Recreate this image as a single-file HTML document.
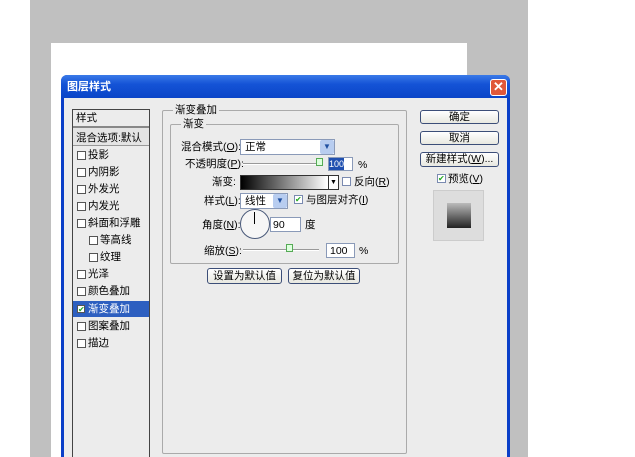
<!DOCTYPE html><html><head><meta charset="utf-8"><style>
*{margin:0;padding:0;box-sizing:border-box}
html,body{width:635px;height:457px;overflow:hidden}
body{background:#fff;position:relative;font-family:"Liberation Sans","Noto Sans CJK SC",sans-serif;font-size:10px;color:#000}
.a{position:absolute}
.t{position:absolute;white-space:nowrap;font-size:10.5px;line-height:12px}
.cb{position:absolute;width:9px;height:9px;border:1px solid #555;background:#fff}
.btn{position:absolute;border:1px solid #3c4e78;border-radius:3px;background:linear-gradient(#fff,#e8e8e0);text-align:center;font-size:10.5px;line-height:12px}
.in{position:absolute;background:#fff;border:1px solid #8a9ab8}
</style></head><body>
<div class="a" style="left:30px;top:0;width:498px;height:457px;background:#c0c0c0"></div>
<div class="a" style="left:51px;top:43px;width:416px;height:414px;background:#fff"></div>
<div class="a" style="left:61px;top:75px;width:449px;height:382px;background:#0a3fc8;border-radius:6px 6px 0 0"></div>
<div class="a" style="left:61px;top:75px;width:449px;height:23px;background:linear-gradient(#3a7ae8,#1453d6 40%,#0a45c8);border-radius:6px 6px 0 0"></div>
<div class="t" style="left:67px;top:81px;color:#fff;font-weight:bold;font-size:11px">图层样式</div>
<div class="a" style="left:490px;top:79px;width:17px;height:17px;background:#e0583a;border:1px solid #fff;border-radius:3px;color:#fff;font-size:13px;line-height:14px;text-align:center;font-weight:bold">✕</div>
<div class="a" style="left:64px;top:98px;width:443px;height:359px;background:#ececec"></div>
<div class="a" style="left:72px;top:109px;width:78px;height:350px;border:1px solid #444;background:#ececec"></div>
<div class="a" style="left:73px;top:126px;width:76px;height:2px;background:#888"></div>
<div class="t" style="left:76px;top:112px">样式</div>
<div class="a" style="left:73px;top:128px;width:76px;height:18px;border-bottom:1px solid #999;background:#e4e4e4"></div>
<div class="t" style="left:76px;top:132px">混合选项:默认</div>
<div class="a" style="left:73px;top:301px;width:76px;height:16px;background:#2d5fc0"></div>
<div class="cb" style="left:77px;top:151px"></div><div class="t" style="left:88px;top:149px">投影</div>
<div class="cb" style="left:77px;top:168px"></div><div class="t" style="left:88px;top:166px">内阴影</div>
<div class="cb" style="left:77px;top:185px"></div><div class="t" style="left:88px;top:183px">外发光</div>
<div class="cb" style="left:77px;top:202px"></div><div class="t" style="left:88px;top:200px">内发光</div>
<div class="cb" style="left:77px;top:219px"></div><div class="t" style="left:88px;top:217px">斜面和浮雕</div>
<div class="cb" style="left:89px;top:236px"></div><div class="t" style="left:100px;top:234px">等高线</div>
<div class="cb" style="left:89px;top:253px"></div><div class="t" style="left:100px;top:251px">纹理</div>
<div class="cb" style="left:77px;top:270px"></div><div class="t" style="left:88px;top:268px">光泽</div>
<div class="cb" style="left:77px;top:287px"></div><div class="t" style="left:88px;top:285px">颜色叠加</div>
<div class="cb" style="left:77px;top:305px;width:8px;height:8px;color:#2a2;font-size:8px;line-height:7px">✔</div><div class="t" style="left:88px;top:303px;color:#fff">渐变叠加</div>
<div class="cb" style="left:77px;top:322px"></div><div class="t" style="left:88px;top:320px">图案叠加</div>
<div class="cb" style="left:77px;top:339px"></div><div class="t" style="left:88px;top:337px">描边</div>
<div class="a" style="left:162px;top:110px;width:245px;height:344px;border:1px solid #aaa;border-radius:2px"></div>
<div class="t" style="left:173px;top:104px;background:#ececec;padding:0 2px">渐变叠加</div>
<div class="a" style="left:170px;top:124px;width:229px;height:140px;border:1px solid #aaa;border-radius:2px"></div>
<div class="t" style="left:181px;top:118px;background:#ececec;padding:0 2px">渐变</div>
<div class="t" style="left:181px;top:141px">混合模式(<u>O</u>):</div>
<div class="in" style="left:240px;top:139px;width:95px;height:16px"></div>
<div class="t" style="left:245px;top:141px">正常</div>
<div class="a" style="left:320px;top:140px;width:14px;height:14px;background:#b8cdf0;border-radius:2px;color:#2050a0;font-size:8px;text-align:center;line-height:14px">▼</div>
<div class="t" style="left:185px;top:158px">不透明度(<u>P</u>):</div>
<div class="a" style="left:243px;top:163px;width:80px;height:2px;border-top:1px solid #999;border-bottom:1px solid #fff"></div>
<div class="a" style="left:316px;top:158px;width:7px;height:8px;background:#dfd;border:1px solid #5a5"></div>
<div class="in" style="left:328px;top:157px;width:25px;height:14px"></div>
<div class="a" style="left:329px;top:158px;width:15px;height:12px;background:#2050b0;color:#fff;font-size:9px;line-height:12px">100</div>
<div class="t" style="left:358px;top:159px">%</div>
<div class="t" style="left:212px;top:176px">渐变:</div>
<div class="a" style="left:240px;top:175px;width:99px;height:15px;border:1px solid #333;background:#fff"></div>
<div class="a" style="left:241px;top:176px;width:86px;height:13px;background:linear-gradient(90deg,#000,#fff)"></div>
<div class="a" style="left:328px;top:176px;width:10px;height:13px;border-left:1px solid #333;font-size:7px;text-align:center;line-height:13px">▼</div>
<div class="cb" style="left:342px;top:177px;border-color:#7a8ab0"></div><div class="t" style="left:354px;top:176px">反向(<u>R</u>)</div>
<div class="t" style="left:204px;top:195px">样式(<u>L</u>):</div>
<div class="in" style="left:240px;top:193px;width:48px;height:16px"></div>
<div class="t" style="left:245px;top:195px">线性</div>
<div class="a" style="left:273px;top:194px;width:14px;height:14px;background:#b8cdf0;border-radius:2px;color:#2050a0;font-size:8px;text-align:center;line-height:14px">▼</div>
<div class="cb" style="left:294px;top:195px;border-color:#7a8ab0;color:#2a2;font-size:8px;line-height:8px">✔</div><div class="t" style="left:306px;top:194px">与图层对齐(<u>I</u>)</div>
<div class="t" style="left:202px;top:219px">角度(<u>N</u>):</div>
<div class="a" style="left:240px;top:209px;width:30px;height:30px;border:1px solid #4a5a7a;border-radius:50%;background:#f6f6f6"></div>
<div class="a" style="left:254px;top:212px;width:1px;height:12px;background:#000"></div>
<div class="in" style="left:270px;top:217px;width:31px;height:15px"></div>
<div class="t" style="left:273px;top:219px">90</div>
<div class="t" style="left:305px;top:219px">度</div>
<div class="t" style="left:204px;top:245px">缩放(<u>S</u>):</div>
<div class="a" style="left:243px;top:249px;width:76px;height:2px;border-top:1px solid #999;border-bottom:1px solid #fff"></div>
<div class="a" style="left:286px;top:244px;width:7px;height:8px;background:#dfd;border:1px solid #5a5"></div>
<div class="in" style="left:326px;top:243px;width:29px;height:15px"></div>
<div class="t" style="left:330px;top:245px">100</div>
<div class="t" style="left:359px;top:245px">%</div>
<div class="btn" style="left:207px;top:268px;width:75px;height:16px;line-height:14px">设置为默认值</div>
<div class="btn" style="left:288px;top:268px;width:72px;height:16px;line-height:14px">复位为默认值</div>
<div class="btn" style="left:420px;top:110px;width:79px;height:14px">确定</div>
<div class="btn" style="left:420px;top:131px;width:79px;height:14px">取消</div>
<div class="btn" style="left:420px;top:152px;width:79px;height:15px">新建样式(<u>W</u>)...</div>
<div class="cb" style="left:437px;top:174px;border-color:#7a8ab0;color:#2a2;font-size:8px;line-height:8px">✔</div><div class="t" style="left:448px;top:173px">预览(<u>V</u>)</div>
<div class="a" style="left:433px;top:190px;width:51px;height:51px;background:#ddd;border:1px solid #ccc"></div>
<div class="a" style="left:447px;top:203px;width:24px;height:25px;background:linear-gradient(#bbb,#222)"></div>
</body></html>
